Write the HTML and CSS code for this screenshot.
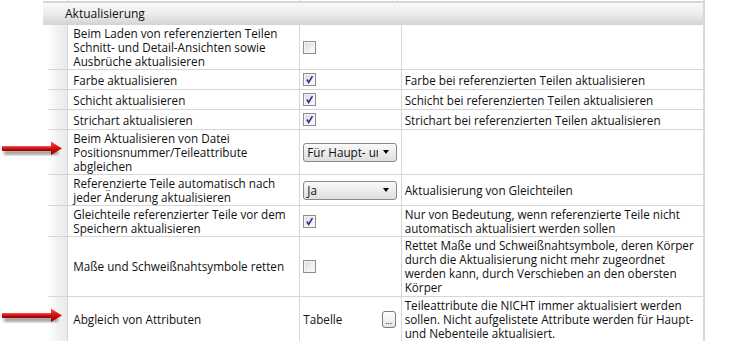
FILE: index.html
```html
<!DOCTYPE html>
<html lang="de">
<head>
    <meta charset="UTF-8">
    <title>Aktualisierung</title>
    <link rel="stylesheet" href="styles.css">
</head>
<body>
    <div class="sheet">
        <table class="grid top-stub">
            <tr>
                <td class="mark"></td><td class="gutter"></td><td class="c1"></td><td class="c2"></td><td class="c3"></td>
            </tr>
        </table>
        <div class="section-head">Aktualisierung</div>
        <table class="grid">
            <tr>
                <td class="mark"></td>
                <td class="gutter"></td>
                <td class="c1">Beim Laden von referenzierten Teilen Schnitt- und Detail-Ansichten sowie Ausbrüche aktualisieren</td>
                <td class="c2"><span class="check"></span></td>
                <td class="c3"></td>
            </tr>
            <tr>
                <td class="mark"></td>
                <td class="gutter"></td>
                <td class="c1">Farbe aktualisieren</td>
                <td class="c2"><span class="check checked"><svg viewBox="0 0 13 13"><path d="M3.5 6.5 L5.5 10 L10 2.5" /></svg></span></td>
                <td class="c3">Farbe bei referenzierten Teilen aktualisieren</td>
            </tr>
            <tr>
                <td class="mark"></td>
                <td class="gutter"></td>
                <td class="c1">Schicht aktualisieren</td>
                <td class="c2"><span class="check checked"><svg viewBox="0 0 13 13"><path d="M3.5 6.5 L5.5 10 L10 2.5" /></svg></span></td>
                <td class="c3">Schicht bei referenzierten Teilen aktualisieren</td>
            </tr>
            <tr>
                <td class="mark"></td>
                <td class="gutter"></td>
                <td class="c1">Strichart aktualisieren</td>
                <td class="c2"><span class="check checked"><svg viewBox="0 0 13 13"><path d="M3.5 6.5 L5.5 10 L10 2.5" /></svg></span></td>
                <td class="c3">Strichart bei referenzierten Teilen aktualisieren</td>
            </tr>
            <tr>
                <td class="mark">
                    <svg class="arrow" viewBox="0 0 66 22">
                        <defs>
                            <linearGradient id="red1" x1="0" y1="0" x2="0" y2="1">
                                <stop offset="0" stop-color="#f25a5a"/>
                                <stop offset="0.45" stop-color="#d81010"/>
                                <stop offset="1" stop-color="#8a0000"/>
                            </linearGradient>
                            <filter id="blur1"><feGaussianBlur stdDeviation="1.6"/></filter>
                        </defs>
                        <rect x="4" y="9" width="54" height="5" fill="#555" opacity="0.55" filter="url(#blur1)"/>
                        <rect x="2" y="5" width="52" height="5" fill="url(#red1)"/>
                        <polygon points="51,0.5 62,7.5 51,14" fill="url(#red1)"/>
                    </svg>
                </td>
                <td class="gutter"></td>
                <td class="c1">Beim Aktualisieren von Datei Positionsnummer/Teileattribute abgleichen</td>
                <td class="c2">
                    <div class="combo"><span class="combo-text">Für Haupt- und Nebenteile</span><span class="combo-arrow"></span></div>
                </td>
                <td class="c3"></td>
            </tr>
            <tr>
                <td class="mark"></td>
                <td class="gutter"></td>
                <td class="c1">Referenzierte Teile automatisch nach jeder Änderung aktualisieren</td>
                <td class="c2">
                    <div class="combo"><span class="combo-text">Ja</span><span class="combo-arrow"></span></div>
                </td>
                <td class="c3">Aktualisierung von Gleichteilen</td>
            </tr>
            <tr>
                <td class="mark"></td>
                <td class="gutter"></td>
                <td class="c1">Gleichteile referenzierter Teile vor dem Speichern aktualisieren</td>
                <td class="c2"><span class="check checked"><svg viewBox="0 0 13 13"><path d="M3.5 6.5 L5.5 10 L10 2.5" /></svg></span></td>
                <td class="c3">Nur von Bedeutung, wenn referenzierte Teile nicht automatisch aktualisiert werden sollen</td>
            </tr>
            <tr class="tall">
                <td class="mark"></td>
                <td class="gutter"></td>
                <td class="c1">Maße und Schweißnahtsymbole retten</td>
                <td class="c2"><span class="check"></span></td>
                <td class="c3">Rettet Maße und Schweißnahtsymbole, deren Körper durch die Aktualisierung nicht mehr zugeordnet werden kann, durch Verschieben an den obersten Körper</td>
            </tr>
            <tr>
                <td class="mark">
                    <svg class="arrow" viewBox="0 0 66 22">
                        <defs>
                            <linearGradient id="red2" x1="0" y1="0" x2="0" y2="1">
                                <stop offset="0" stop-color="#f25a5a"/>
                                <stop offset="0.45" stop-color="#d81010"/>
                                <stop offset="1" stop-color="#8a0000"/>
                            </linearGradient>
                            <filter id="blur2"><feGaussianBlur stdDeviation="1.6"/></filter>
                        </defs>
                        <rect x="4" y="9" width="54" height="5" fill="#555" opacity="0.55" filter="url(#blur2)"/>
                        <rect x="2" y="5" width="52" height="5" fill="url(#red2)"/>
                        <polygon points="51,0.5 62,7.5 51,14" fill="url(#red2)"/>
                    </svg>
                </td>
                <td class="gutter"></td>
                <td class="c1">Abgleich von Attributen</td>
                <td class="c2">
                    <div class="table-cell"><span>Tabelle</span><span class="dots">...</span></div>
                </td>
                <td class="c3">Teileattribute die NICHT immer aktualisiert werden sollen. Nicht aufgelistete Attribute werden für Haupt- und Nebenteile aktualisiert.</td>
            </tr>
        </table>
    </div>
</body>
</html>
```

FILE: styles.css
```css
body {
    margin: 0;
    font-family: "Open Sans", "Noto Sans", sans-serif;
    font-size: 11.7px;
    line-height: 14px;
    color: #111;
    background: #fff;
}
.sheet {
    width: 705px;
}
.grid {
    border-collapse: collapse;
    table-layout: fixed;
    width: 705px;
}
.grid td {
    padding: 1px 4px;
    height: 17px;
    vertical-align: middle;
    border: 1px solid #d6d6d6;
    border-top: none;
    overflow: hidden;
}
.grid td.mark {
    width: 48px;
    padding: 0;
    border: none;
    overflow: visible;
}
.grid td.gutter {
    width: 19px;
    padding: 0;
    border-left: none;
    background: linear-gradient(to right, #fff 0, #f4f4f4 40%, #e9e9e9 100%);
}
.grid td.c1 {
    width: 221px;
    padding-left: 5px;
}
.grid td.c2 {
    width: 93px;
    padding-left: 3px;
}
.grid td.c3 {
    width: 295px;
    padding-left: 3px;
    padding-right: 2px;
    border-right: 2px solid #d8d8d8;
}
.grid tr.tall td {
    padding-bottom: 2px;
}
.top-stub td {
    height: 1px;
    padding: 0;
    border-bottom: none;
}
.top-stub td.gutter {
    background: none;
}
.section-head {
    margin-left: 43px;
    height: 22px;
    line-height: 21px;
    padding-left: 22px;
    border-top: 2px solid #d6d6d6;
    border-right: 2px solid #d8d8d8;
    background: linear-gradient(to bottom, #f9f9f9 0, #ececec 50%, #d3d3d3 100%);
    font-size: 12px;
}
.check {
    display: block;
    width: 11px;
    height: 11px;
    border: 1px solid #8e8e8e;
    box-shadow: inset 0 0 0 1px #f4f4f4;
    background: linear-gradient(135deg, #d5d8e0 0, #eef0f4 60%, #fff 100%);
}
.check svg {
    display: block;
    width: 11px;
    height: 11px;
}
.check svg path {
    fill: none;
    stroke: #2d2f86;
    stroke-width: 1.8;
}
.combo {
    display: flex;
    align-items: center;
    width: 92px;
    height: 17px;
    border: 1px solid #8a8a8a;
    border-radius: 3px;
    background: linear-gradient(to bottom, #fafafa 0, #ececec 50%, #dedede 100%);
}
.combo-text {
    flex: 1;
    height: 17px;
    line-height: 17px;
    overflow: hidden;
    white-space: nowrap;
    padding-left: 3px;
    margin-right: 5px;
}
.combo-arrow {
    width: 0;
    height: 0;
    margin-right: 7px;
    border-left: 3.5px solid transparent;
    border-right: 3.5px solid transparent;
    border-top: 4px solid #000;
}
.table-cell {
    display: flex;
    align-items: center;
    justify-content: space-between;
}
.dots {
    width: 12px;
    height: 15px;
    margin-right: 1px;
    border: 1px solid #7a7a7a;
    border-radius: 3px;
    background: linear-gradient(to bottom, #fff 0, #e4e4e4 100%);
    font-size: 9px;
    line-height: 17px;
    text-align: center;
}
/* arrow sticks out over the gutter column */
.arrow {
    position: relative;
    z-index: 1;
    display: block;
    width: 66px;
    height: 22px;
}
```
